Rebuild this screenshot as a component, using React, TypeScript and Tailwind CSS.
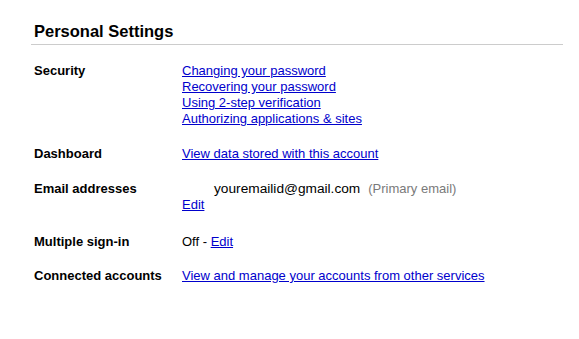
import React from 'react'

// Settings page: a heading with a rule, then label / value rows
const link = 'text-[#0000cc] underline'

function Row({ label, className, children }: { label: string; className?: string; children: React.ReactNode }) {
  return (
    <div className={`flex ${className ?? ''}`}>
      <div className="w-[148px] shrink-0 font-bold">{label}</div>
      <div className="flex flex-col">{children}</div>
    </div>
  )
}

export default function App() {
  return (
    <div className="min-h-screen bg-white text-black text-[13px] leading-[16px]" style={{ fontFamily: '"Liberation Sans", Arial, sans-serif' }}>
      <div className="ml-[31px] w-[532px]">
        <h1 className="pt-[21px] pb-[3px] pl-[3px] text-[16.5px] leading-[20px] font-bold border-b border-[#cccccc]">
          Personal Settings
        </h1>
        <div className="pl-[3px]">
          <Row label="Security" className="mt-[18px]">
            <a href="#" className={link}>Changing your password</a>
            <a href="#" className={link}>Recovering your password</a>
            <a href="#" className={link}>Using 2-step verification</a>
            <a href="#" className={link}>Authorizing applications &amp; sites</a>
          </Row>
          <Row label="Dashboard" className="mt-[19px]">
            <a href="#" className={link}>View data stored with this account</a>
          </Row>
          <Row label="Email addresses" className="mt-[19px]">
            <div className="flex items-baseline pl-[32px]">
              <span className="text-[13.7px]">youremailid@gmail.com</span>
              <span className="ml-[8px] text-[#7a7a7a]">(Primary email)</span>
            </div>
            <a href="#" className={`${link} self-start`}>Edit</a>
          </Row>
          <Row label="Multiple sign-in" className="mt-[21px]">
            <div>
              Off - <a href="#" className={link}>Edit</a>
            </div>
          </Row>
          <Row label="Connected accounts" className="mt-[18px]">
            <a href="#" className={link}>View and manage your accounts from other services</a>
          </Row>
        </div>
      </div>
    </div>
  )
}
